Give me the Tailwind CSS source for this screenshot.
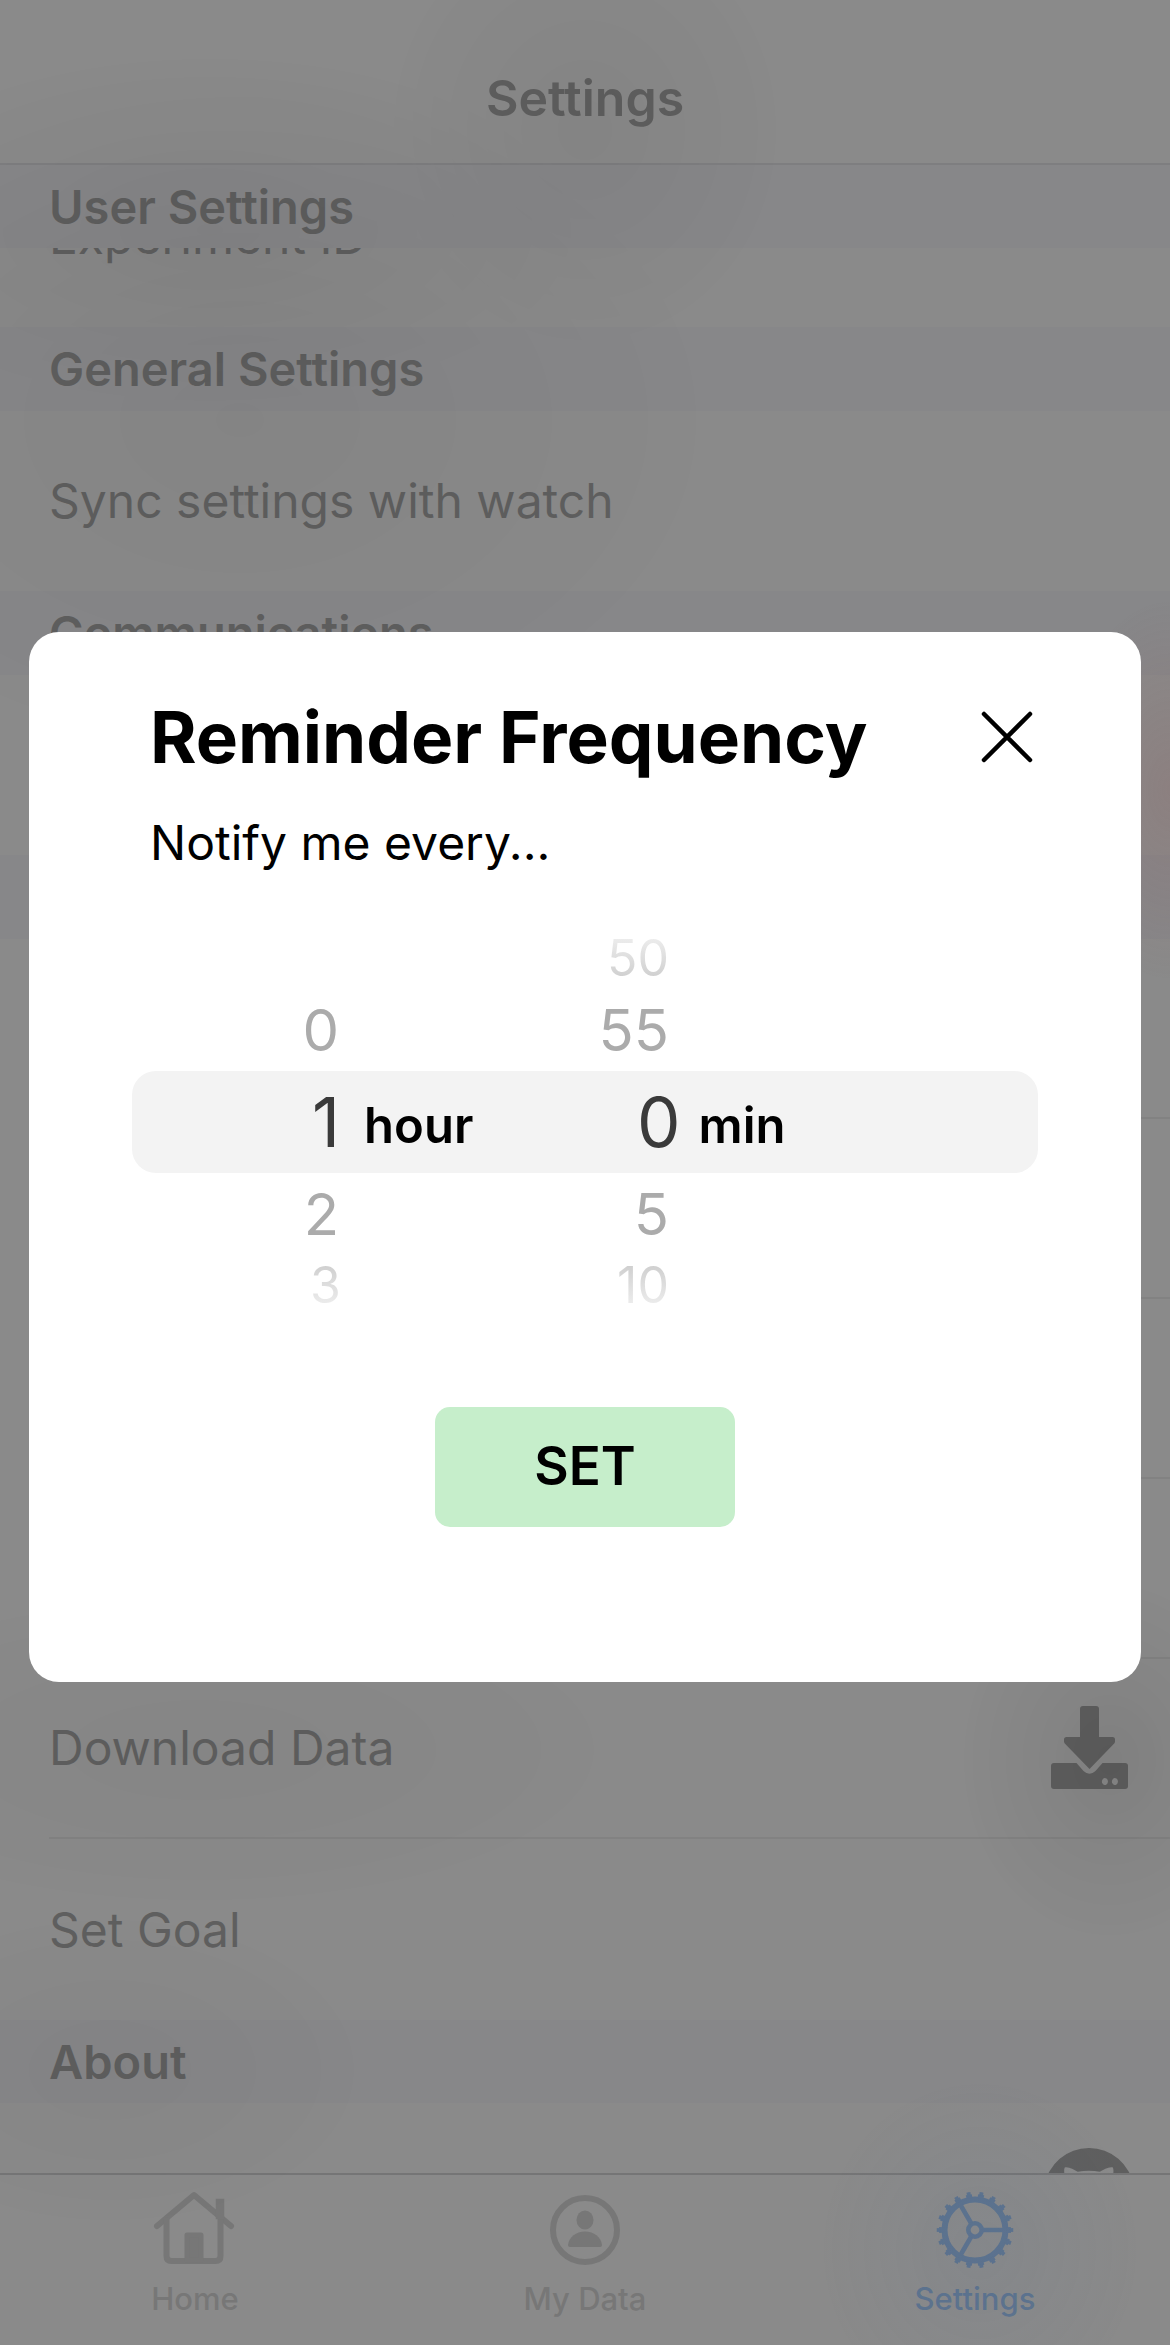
<!DOCTYPE html>
<html lang="en">
<head>
<meta charset="utf-8">
<meta name="viewport" content="width=device-width, initial-scale=1">
<title>Settings</title>
<script src="https://cdn.jsdelivr.net/npm/@tailwindcss/browser@4"></script>
</head>
<body class="bg-[#8a8a8a] font-['Inter',sans-serif] text-[#5f5f5f]">
<div class="flex h-screen flex-col overflow-hidden">
  <header class="flex h-[165px] shrink-0 items-end justify-center border-b-2 border-[#7e7e80] pb-[35px]">
    <h1 class="text-[50px] leading-[60px] font-semibold">Settings</h1>
  </header>

  <main class="min-h-0 flex-1 overflow-hidden text-[48px] leading-[60px]">
    <h2 class="flex h-[83px] items-center bg-[#878789] px-[49px] text-[47px] font-semibold">User Settings</h2>
    <!-- Row partly scrolled under the sticky section title -->
    <div class="flex h-[79px] flex-col justify-end overflow-hidden">
      <div class="flex h-[180px] shrink-0 items-center px-[49px]">Experiment ID</div>
    </div>

    <h2 class="flex h-[84px] items-center bg-[#878789] px-[49px] text-[47px] font-semibold">General Settings</h2>
    <div class="flex h-[180px] items-center px-[49px]">Sync settings with watch</div>

    <h2 class="flex h-[84px] items-center bg-[#878789] px-[49px] text-[47px] font-semibold">Communications</h2>
    <div class="h-[180px]"></div>

    <div class="h-[84px] bg-[#878789]"></div>
    <div class="ml-[49px] h-[180px] border-b-2 border-[#828282]"></div>
    <div class="ml-[49px] h-[180px] border-b-2 border-[#828282]"></div>
    <div class="ml-[49px] h-[180px] border-b-2 border-[#828282]"></div>
    <div class="ml-[49px] h-[180px] border-b-2 border-[#828282]"></div>
    <div class="ml-[49px] flex h-[180px] items-center justify-between border-b-2 border-[#828282] pr-[35px]">
      <span>Download Data</span>
      <button type="button" aria-label="Download data">
        <svg class="h-[90px] w-[90px]" viewBox="0 0 90 90" fill="currentColor">
          <path d="M38 3h13q3 0 3 3v28h13.500q2.500 0 2.500 2.500v2q0 1-.8 2L44.500 66 19.800 40.500q-.8-1-.8-2v-2q0-2.500 2.500-2.500H35V6q0-3 3-3Z"/>
          <path fill-rule="evenodd" d="M9 60h22.500l7 8q6 5.500 12 0l7-8H80q3 0 3 3v20q0 3-3 3H9q-3 0-3-3V63q0-3 3-3Zm52.500 15.500a3 3.500 0 1 0 0 6 3 3.500 0 0 0 0-6Zm10 0a3 3.500 0 1 0 0 6 3 3.500 0 0 0 0-6Z"/>
        </svg>
      </button>
    </div>
    <div class="flex h-[181px] items-center px-[49px]">Set Goal</div>

    <h2 class="flex h-[83px] items-center bg-[#878789] px-[49px] text-[47px] font-semibold">About</h2>
    <div class="ml-[49px] flex h-[180px] items-center justify-end pr-[36px]">
      <a href="#github" aria-label="GitHub">
        <svg class="h-[90px] w-[90px]" viewBox="0 0 90 90" fill="currentColor">
          <path d="M45 0a45 45 0 0 0-14 87.800c2 .4 3-1 3-2.200v-9c-12 2.500-15-5-15-5-2-5-5-6.500-5-6.500-4-3 .3-3 .3-3 4.500.3 7 4.700 7 4.700 4 7 10.500 5 13 3.700.4-3 1.600-5 3-6C27 63.500 17 59.500 17 42c0-5 2-9 4.500-12.500-1-2-2-7-.8-10 4-1 9 2 13 4.300 7-1.500 15.200-1.500 22.200 0 4-2.500 9-5.300 13-4.300 1.200 3 .3 8-.7 10C71 33 73 37 73 42c0 17.500-10 21.500-20.500 22.500 1.800 1.500 3.500 4.500 3.500 9V85.600c0 1.200 1 2.600 3 2.200A45 45 0 0 0 45 0Z"/>
        </svg>
      </a>
    </div>
  </main>

  <nav aria-label="Tabs" class="grid h-[172px] shrink-0 grid-cols-3 border-t-2 border-[#757576] text-[31px] leading-[36px] font-medium text-[#777777]">
    <a href="#home" class="flex flex-col items-center gap-[8px] pt-[14px]">
      <svg class="h-[84px] w-[84px]" viewBox="0 0 84 84" fill="none" stroke="currentColor" stroke-width="6" stroke-linecap="round" stroke-linejoin="round">
        <path d="M4 37 41 6l37 31"/>
        <path d="M13.500 31v36q0 5 5 5h44q5 0 5-5V31"/>
        <path d="M67 14v12" stroke-width="8.500" stroke-linecap="square"/>
        <path d="M34 46h14v25H34Z" fill="currentColor" stroke-width="5"/>
      </svg>
      <span>Home</span>
    </a>
    <a href="#data" class="flex flex-col items-center gap-[8px] pt-[14px]">
      <svg class="h-[84px] w-[84px]" viewBox="0 0 84 84" fill="currentColor">
        <circle cx="42" cy="41" r="32" fill="none" stroke="currentColor" stroke-width="6"/>
        <ellipse cx="42" cy="31" rx="8.500" ry="9.500"/>
        <path d="M27 58q-2 0-2-2c1-8 8-13.500 17-13.500S58 48 59 56q0 2-2 2Z"/>
      </svg>
      <span>My Data</span>
    </a>
    <a href="#settings" aria-current="page" class="flex flex-col items-center gap-[8px] pt-[14px] text-[#5d738e]">
      <svg class="h-[84px] w-[84px]" viewBox="0 0 84 84" fill="none" stroke="currentColor">
        <circle cx="42" cy="41" r="30.500" stroke-width="6"/>
        <circle cx="42" cy="41" r="34" stroke-width="4" pathLength="180" stroke-dasharray="5 5" stroke-dashoffset="2.500"/>
        <circle cx="42" cy="41" r="36.500" stroke-width="3.500" pathLength="180" stroke-dasharray="3 7" stroke-dashoffset="1.500"/>
        <circle cx="42" cy="41" r="6.700" stroke-width="4.600"/>
        <path stroke-width="4.600" d="M50 41h20M38 34 27.500 16M38 48 27.500 66"/>
      </svg>
      <span>Settings</span>
    </a>
  </nav>
</div>

<!-- Dimmed backdrop with soft tints, and the dialog over it -->
<div class="fixed inset-0 flex items-center justify-center bg-[radial-gradient(200px_220px_at_50%_130px,#0000000b,transparent),radial-gradient(380px_180px_at_210px_230px,#0000000a,transparent),radial-gradient(480px_340px_at_240px_420px,#0000000a,transparent),radial-gradient(420px_160px_at_200px_1750px,#00000008,transparent),radial-gradient(150px_180px_at_1110px_1760px,#00000012,transparent),radial-gradient(260px_160px_at_110px_2070px,#00000008,transparent),radial-gradient(110px_190px_at_100%_790px,#96565630,transparent),radial-gradient(160px_170px_at_980px_2250px,#4a6a9614,transparent)] px-[29px] pb-[32px]">
  <section role="dialog" aria-modal="true" aria-labelledby="dialog-title" class="flex w-full flex-col rounded-[30px] bg-white px-[103px] pt-[63px] pb-[155px] text-black">
    <div class="flex items-center justify-between pr-[5px] pl-[18px]">
      <h2 id="dialog-title" class="text-[71px] leading-[84px] font-bold whitespace-nowrap">Reminder Frequency</h2>
      <button type="button" aria-label="Close">
        <svg class="h-[52px] w-[52px]" viewBox="0 0 52 52" fill="none" stroke="currentColor" stroke-width="4.500" stroke-linecap="round"><path d="m3 3 46 46M49 3 3 49"/></svg>
      </button>
    </div>
    <p class="mt-[34px] pl-[18px] text-[48px] leading-[60px]">Notify me every...</p>

    <div role="group" aria-label="Reminder interval" class="mt-[55px] text-[58px] leading-[60px] text-[#ababab]">
      <div class="grid h-[61px] grid-cols-[209fr_130fr_210fr_357fr] items-center text-right text-[50px]">
        <span></span><span></span>
        <span class="bg-linear-to-b from-[#f4f4f4] to-[#c8c8c8] bg-clip-text pr-[12px] text-transparent">50</span>
      </div>
      <div class="grid h-[82px] grid-cols-[209fr_130fr_210fr_357fr] items-center text-right">
        <span class="pr-[2px]">0</span><span></span><span class="pr-[12px]">55</span>
      </div>
      <div class="grid h-[102px] grid-cols-[209fr_130fr_210fr_357fr] items-center rounded-[24px] bg-[#f3f3f3] text-right text-[69px] text-[#3a3a3a]">
        <span>1</span>
        <span class="pt-[8px] pl-[24px] text-left text-[49px] font-semibold text-black">hour</span>
        <span class="pr-[2px]">0</span>
        <span class="pt-[8px] pl-[16px] text-left text-[49px] font-semibold text-black">min</span>
      </div>
      <div class="grid h-[82px] grid-cols-[209fr_130fr_210fr_357fr] items-center text-right">
        <span class="pr-[2px]">2</span><span></span><span class="pr-[12px]">5</span>
      </div>
      <div class="grid h-[61px] grid-cols-[209fr_130fr_210fr_357fr] items-center text-right text-[50px]">
        <span class="bg-linear-to-b from-[#c8c8c8] to-[#f4f4f4] bg-clip-text text-transparent">3</span><span></span>
        <span class="bg-linear-to-b from-[#c8c8c8] to-[#f4f4f4] bg-clip-text pr-[12px] text-transparent">10</span>
      </div>
    </div>

    <button type="button" class="mt-[91px] h-[120px] w-[300px] self-center rounded-[15px] bg-[#c6eecb] text-[53px] font-semibold">SET</button>
  </section>
</div>
</body>
</html>
